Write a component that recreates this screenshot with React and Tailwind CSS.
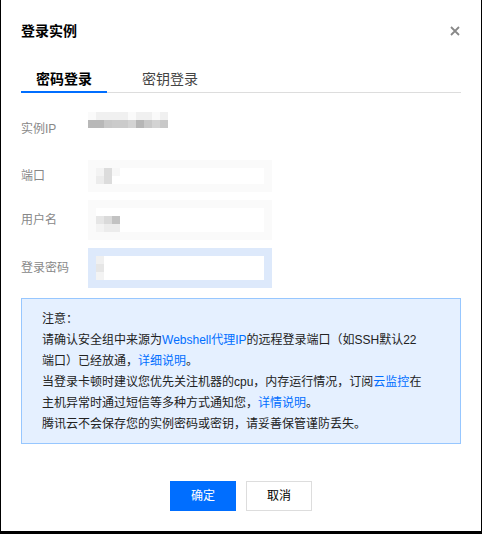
const ipTop = ["bg-[#fafafa]", "bg-[#f0f0f0]", "bg-[#f0f0f0]", "bg-[#f0f0f0]", "bg-[#f0f0f0]", "bg-[#fafafa]", "bg-[#f0f0f0]", "bg-[#f0f0f0]", "bg-[#fafafa]", "bg-[#f0f0f0]"];
const ipBottom = ["bg-[#b8b8b8]", "bg-[#b8b8b8]", "bg-[#c8c8c8]", "bg-[#cbcbcb]", "bg-[#cbcbcb]", "bg-[#d3d3d3]", "bg-[#b6b6b6]", "bg-[#c8c8c8]", "bg-[#d3d3d3]", "bg-[#c8c8c8]"];

// blurred values, one array per 8px row
const portBlocks = [
  ["bg-[#f3f3f3]", "bg-[#dcdcdc]", "bg-[#f7f7f7]"],
  ["bg-[#ececec]", "bg-[#dcdcdc]", "bg-white"],
];
const userBlocks = [
  ["bg-white", "bg-white", "bg-white"],
  ["bg-[#e6e6e6]", "bg-[#dadada]", "bg-[#c2c2c2]"],
  ["bg-[#f3f3f3]", "bg-[#ececec]", "bg-[#ececec]"],
];
const pwdBlocks = [["bg-[#f0f0f0]"], ["bg-[#e6e6e6]"], ["bg-[#f3f3f3]"]];

const Blocks = ({ rows }) => (
  <div className="flex flex-col">
    {rows.map((row, i) => (
      <div key={i} className="flex">
        {row.map((c, j) => (
          <div key={j} className={`w-2 h-2 ${c}`} />
        ))}
      </div>
    ))}
  </div>
);

const BlurInput = ({ rows, outer, height }) => (
  <div className={`w-[184px] ${height} p-2 ${outer}`}>
    <div className="h-full bg-white flex">
      <Blocks rows={rows} />
    </div>
  </div>
);

const Label = ({ children, className = "" }) => (
  <div className={`w-[67px] shrink-0 text-xs leading-5 text-[#888] ${className}`}>{children}</div>
);

const Link = ({ children }) => <span className="text-[#006eff]">{children}</span>;

export default function App() {
  return (
    <div className="w-[482px] h-[534px] bg-white border-l border-r border-b-[3px] border-black px-5 font-['Liberation_Sans','Noto_Sans_CJK_SC',sans-serif]">
      <div className="pt-[21px] flex items-center justify-between h-[41px]">
        <div className="text-sm leading-5 font-bold text-black">登录实例</div>
        <svg width="10" height="10" viewBox="0 0 10 10" className="mr-px">
          <path d="M1 1L9 9M9 1L1 9" stroke="#888" strokeWidth="1.8" />
        </svg>
      </div>

      <div className="mt-7 flex border-b border-[#ddd]">
        <div className="-mb-px px-[15px] pb-[2px] border-b-2 border-[#006eff] text-sm leading-5 font-bold text-black">
          密码登录
        </div>
        <div className="-mb-px ml-5 px-[15px] pb-[2px] border-b-2 border-transparent text-sm leading-5 text-[#444]">
          密钥登录
        </div>
      </div>

      <div className="mt-[19px] flex flex-col gap-2">
        <div className="flex items-start h-10">
          <Label className="mt-[7px]">实例IP</Label>
          <div className="flex flex-col">
            <div className="flex">
              {ipTop.map((c, i) => (
                <div key={i} className={`w-2 h-2 ${c}`} />
              ))}
            </div>
            <div className="flex">
              {ipBottom.map((c, i) => (
                <div key={i} className={`w-2 h-2 ${c}`} />
              ))}
            </div>
          </div>
        </div>
        <div className="flex items-center h-8">
          <Label>端口</Label>
          <BlurInput rows={portBlocks} outer="bg-[#fafafa]" height="h-8" />
        </div>
        <div className="flex items-center h-10">
          <Label>用户名</Label>
          <BlurInput rows={userBlocks} outer="bg-[#fafafa]" height="h-10" />
        </div>
        <div className="flex items-center h-10">
          <Label>登录密码</Label>
          <BlurInput rows={pwdBlocks} outer="bg-[#dde9fb]" height="h-10" />
        </div>
      </div>

      <div className="mt-[10px] border border-[#97c7ff] bg-[#e5f0ff] pl-5 pt-[10px] pb-2 text-xs leading-[21px] text-[#222] whitespace-nowrap">
        <div>注意：</div>
        <div>
          请确认安全组中来源为<Link>Webshell代理IP</Link>的远程登录端口（如SSH默认22
        </div>
        <div>
          端口）已经放通，<Link>详细说明</Link>。
        </div>
        <div>
          当登录卡顿时建议您优先关注机器的cpu，内存运行情况，订阅<Link>云监控</Link>在
        </div>
        <div>
          主机异常时通过短信等多种方式通知您，<Link>详情说明</Link>。
        </div>
        <div>腾讯云不会保存您的实例密码或密钥，请妥善保管谨防丢失。</div>
      </div>

      <div className="mt-[37px] flex justify-center gap-[10px]">
        <button type="button" className="w-[66px] h-[30px] bg-[#006eff] text-white text-xs">
          确定
        </button>
        <button type="button" className="w-[66px] h-[30px] border border-[#ddd] bg-white text-black text-xs">
          取消
        </button>
      </div>
    </div>
  );
}
